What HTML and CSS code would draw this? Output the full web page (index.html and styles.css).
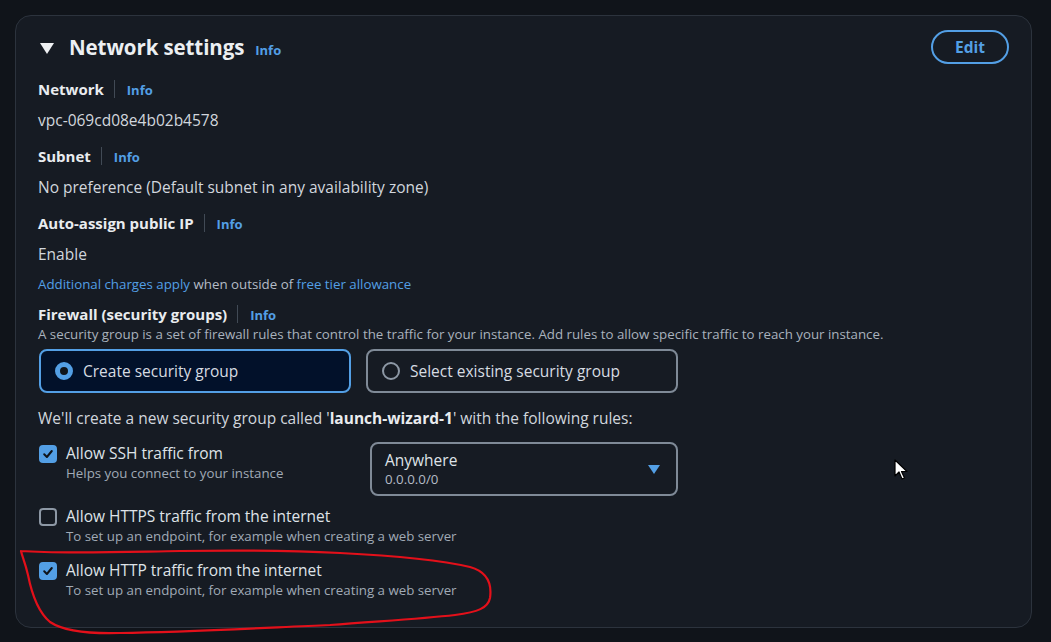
FILE: index.html
```html
<!DOCTYPE html>
<html>
<head>
<meta charset="utf-8">
<link rel="stylesheet" href="styles.css">
</head>
<body>
<div class="page">
  <section class="card">
    <header class="head">
      <div class="title">
        <span class="caret"></span>
        <h2>Network settings</h2>
        <a class="info info-title">Info</a>
      </div>
      <button class="edit">Edit</button>
    </header>

    <div class="field f-network">
      <div class="label"><span>Network</span><span class="sep"></span><a class="info">Info</a></div>
      <div class="value">vpc-069cd08e4b02b4578</div>
    </div>
    <div class="field">
      <div class="label"><span>Subnet</span><span class="sep"></span><a class="info">Info</a></div>
      <div class="value">No preference (Default subnet in any availability zone)</div>
    </div>
    <div class="field">
      <div class="label"><span>Auto-assign public IP</span><span class="sep"></span><a class="info">Info</a></div>
      <div class="value">Enable</div>
      <div class="note"><a class="link">Additional charges apply</a> when outside of <a class="link">free tier allowance</a></div>
    </div>
    <div class="field f-firewall">
      <div class="label"><span>Firewall (security groups)</span><span class="sep"></span><a class="info">Info</a></div>
      <div class="desc">A security group is a set of firewall rules that control the traffic for your instance. Add rules to allow specific traffic to reach your instance.</div>
      <div class="tiles">
        <div class="tile selected"><span class="radio on"></span>Create security group</div>
        <div class="tile"><span class="radio"></span>Select existing security group</div>
      </div>
    </div>

    <p class="will">We'll create a new security group called '<b>launch-wizard-1</b>' with the following rules:</p>

    <div class="rule rule-ssh">
      <div class="check-row ssh-row">
        <span class="cb on"><svg viewBox="0 0 12 12" width="12" height="12"><path d="M2.2 6.3 L4.9 9 L9.8 3" fill="none" stroke="#0f141a" stroke-width="2" stroke-linecap="round" stroke-linejoin="round"/></svg></span>
        <div class="ctext">
          <div class="clabel">Allow SSH traffic from</div>
          <div class="csub">Helps you connect to your instance</div>
        </div>
      </div>
      <div class="select">
        <div class="stext">
          <div class="sval">Anywhere</div>
          <div class="ssub">0.0.0.0/0</div>
        </div>
        <span class="stri"></span>
      </div>
    </div>

    <div class="rule">
      <div class="check-row">
        <span class="cb"></span>
        <div class="ctext">
          <div class="clabel">Allow HTTPS traffic from the internet</div>
          <div class="csub">To set up an endpoint, for example when creating a web server</div>
        </div>
      </div>
    </div>

    <div class="rule rule-http">
      <div class="check-row">
        <span class="cb on"><svg viewBox="0 0 12 12" width="12" height="12"><path d="M2.2 6.3 L4.9 9 L9.8 3" fill="none" stroke="#0f141a" stroke-width="2" stroke-linecap="round" stroke-linejoin="round"/></svg></span>
        <div class="ctext">
          <div class="clabel">Allow HTTP traffic from the internet</div>
          <div class="csub">To set up an endpoint, for example when creating a web server</div>
        </div>
      </div>
    </div>
  </section>

  <svg class="annot" width="1051" height="642" viewBox="0 0 1051 642">
    <path d="M21 551 C 60 554, 120 552, 180 551 C 240 550, 300 551, 340 553 C 400 556, 440 560, 470 567 C 488 572, 492 584, 490 598 C 488 608, 478 612, 455 615 C 420 619, 380 621, 330 625 C 260 628, 190 632, 120 633 C 85 634, 62 630, 50 622 C 38 612, 32 595, 28 575 C 25 562, 22 556, 21 551" fill="none" stroke="#e3101a" stroke-width="2.2" stroke-linecap="round" stroke-linejoin="round"/>
  </svg>
  <svg class="cursor" width="16" height="22" viewBox="0 0 16 22">
    <path d="M1 1 L1 17 L5 13 L8 20 L10.5 19 L7.5 12.5 L13 12.5 Z" fill="#fff" stroke="#000" stroke-width="1.2" stroke-linejoin="round"/>
  </svg>
</div>
</body>
</html>
```

FILE: styles.css
```css
* { box-sizing: border-box; }
html, body { margin: 0; padding: 0; }
body {
  background: #10141a;
  font-family: "Open Sans", "Noto Sans", "Liberation Sans", sans-serif;
  color: #d5dbe3;
  width: 1051px;
  height: 642px;
  overflow: hidden;
}
.page {
  position: relative;
  width: 1051px;
  height: 642px;
  padding: 15px 19px 0 15px;
}
.card {
  background: #161b23;
  border: 1px solid #2c333d;
  border-radius: 16px;
  height: 613px;
  padding: 14px 22px 0 22px;
}
.head {
  display: flex;
  justify-content: space-between;
  align-items: center;
  height: 34px;
}
.title {
  display: flex;
  align-items: center;
}
.caret {
  width: 0; height: 0;
  border-left: 7px solid transparent;
  border-right: 7px solid transparent;
  border-top: 11px solid #eef0f2;
  margin: 2px 15px 0 2px;
}
h2 {
  margin: 0;
  font-size: 20.5px;
  font-weight: 700;
  color: #eceff2;
  letter-spacing: -0.1px;
}
.info {
  color: #539fe5;
  font-weight: 700;
  font-size: 13px;
}
.info-title { margin-left: 11px; margin-top: 5px; }
.edit {
  font-family: inherit;
  background: transparent;
  border: 2px solid #539fe5;
  color: #539fe5;
  font-weight: 700;
  font-size: 15.5px;
  border-radius: 18px;
  width: 78px;
  height: 34px;
  padding: 0;
}
.field { margin-top: 14px; }
.f-network { margin-top: 14px; }
.label {
  display: flex;
  align-items: center;
  height: 22px;
  font-size: 15px;
  font-weight: 700;
  color: #e9ecef;
}
.sep {
  width: 1px;
  height: 18px;
  background: #414a55;
  margin: 0 12px 0 10px;
}
.label .info { margin-top: 1px; }
.value {
  margin-top: 9px;
  font-size: 15.5px;
  line-height: 22px;
  color: #d1d6dd;
}
.note {
  margin-top: 10px;
  font-size: 13.3px;
  line-height: 18px;
  color: #b4bcc6;
}
.link { color: #539fe5; }
.f-firewall { margin-top: 10px; }
.desc {
  font-size: 13.3px;
  line-height: 18px;
  color: #a9b2bd;
  white-space: nowrap;
}
.tiles {
  display: flex;
  gap: 15px;
  margin-top: 6px;
  padding-left: 1px;
}
.tile {
  width: 312px;
  height: 44px;
  border: 2px solid #7f8a97;
  border-radius: 8px;
  display: flex;
  align-items: center;
  padding-left: 14px;
  font-size: 15.5px;
  color: #d7dce2;
}
.tile.selected {
  background: #02112a;
  border-color: #539fe5;
}
.radio {
  width: 18px; height: 18px;
  border-radius: 50%;
  border: 2px solid #8d98a5;
  margin-right: 10px;
  flex: none;
}
.radio.on {
  border: 5px solid #539fe5;
  background: #0f141a;
}
.will {
  margin: 14px 0 0 0;
  font-size: 15.5px;
  line-height: 22px;
  color: #d1d6dd;
}
.will b { color: #e9ecef; }
.rule { margin-top: 9px; display: flex; }
.rule-ssh { margin-top: 13px; }
.rule-http { margin-top: 14px; }
.check-row {
  display: flex;
  align-items: flex-start;
}
.ssh-row { width: 332px; }
.cb {
  width: 18px; height: 18px;
  border: 2px solid #8d98a5;
  border-radius: 4px;
  margin: 3px 9px 0 1px;
  flex: none;
  display: flex;
  align-items: center;
  justify-content: center;
}
.cb.on {
  background: #539fe5;
  border-color: #539fe5;
}
.clabel {
  font-size: 15.5px;
  line-height: 22px;
  color: #dfe3e8;
}
.csub {
  font-size: 13.3px;
  line-height: 18px;
  color: #a0aab6;
  white-space: nowrap;
}
.select {
  width: 308px;
  height: 54px;
  border: 2px solid #7f8a97;
  border-radius: 8px;
  display: flex;
  align-items: center;
  justify-content: space-between;
  padding: 0 16px 0 13px;
}
.sval { font-size: 15.5px; line-height: 19px; color: #dfe3e8; }
.ssub { font-size: 13.3px; line-height: 18px; color: #b4bcc6; }
.stri {
  width: 0; height: 0;
  border-left: 6px solid transparent;
  border-right: 6px solid transparent;
  border-top: 9px solid #539fe5;
}
.annot {
  position: absolute;
  left: 0; top: 0;
  pointer-events: none;
}
.cursor {
  position: absolute;
  left: 894px;
  top: 459px;
}
```
